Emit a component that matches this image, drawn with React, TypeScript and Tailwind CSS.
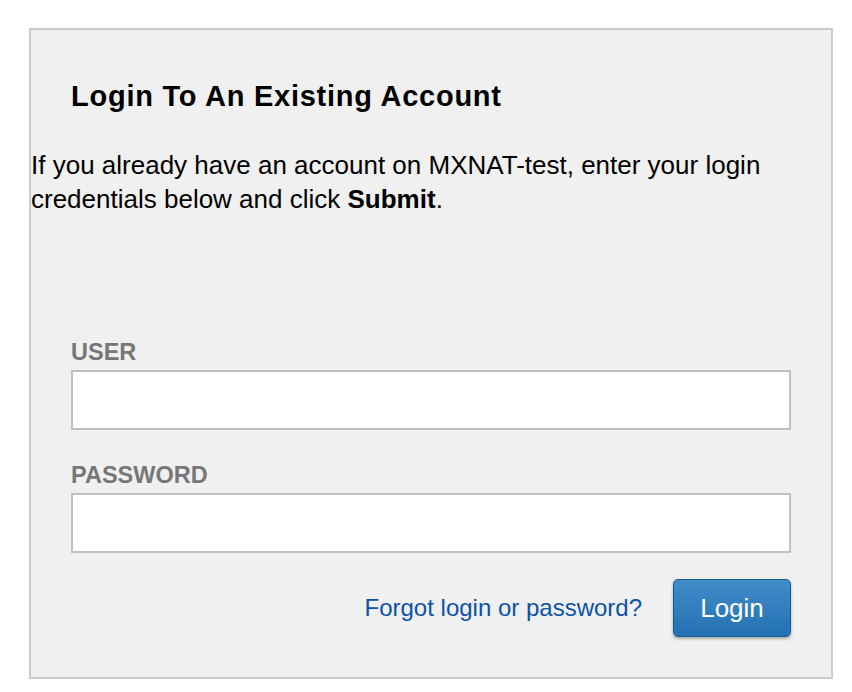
export default function App() {
  return (
    <div className="min-h-screen bg-white font-['Liberation_Sans',Arial,sans-serif] text-black">
      <div className="ml-[29px] mt-[28px] w-[804px] border-2 border-[#cccccc] bg-[#f0f0f0] pb-[40px] pt-[49px]">
        <h2 className="pl-[40px] text-[29px] font-bold leading-[34px] tracking-[0.75px]">
          Login To An Existing Account
        </h2>
        <p className="mt-[35px] text-[26px] leading-[34px]">
          If you already have an account on MXNAT-test, enter your login credentials below and click{' '}
          <strong className="font-bold">Submit</strong>.
        </p>

        <form className="mt-[123px] px-[40px]" onSubmit={(e) => e.preventDefault()}>
          <label className="block text-[23.5px] font-bold leading-[27px] text-[#777777]">USER</label>
          <input
            type="text"
            className="mt-[4px] block h-[60px] w-full border-2 border-[#c0c0c0] bg-white px-2 text-[22px] outline-none"
          />
          <label className="mt-[32px] block text-[23.5px] font-bold leading-[27px] text-[#777777]">PASSWORD</label>
          <input
            type="password"
            className="mt-[4px] block h-[60px] w-full border-2 border-[#c0c0c0] bg-white px-2 text-[22px] outline-none"
          />
          <div className="mt-[26px] flex items-center justify-end gap-[31px]">
            <a href="#" className="text-[24px] leading-[28px] text-[#0d52a8]">
              Forgot login or password?
            </a>
            <button
              type="submit"
              className="h-[58px] w-[118px] rounded-[5px] border border-[#1c5a93] bg-gradient-to-b from-[#418dc9] to-[#2370b3] text-[26px] leading-none text-white shadow-[0_2px_3px_rgba(0,0,0,0.3)]"
            >
              Login
            </button>
          </div>
        </form>
      </div>
    </div>
  );
}
